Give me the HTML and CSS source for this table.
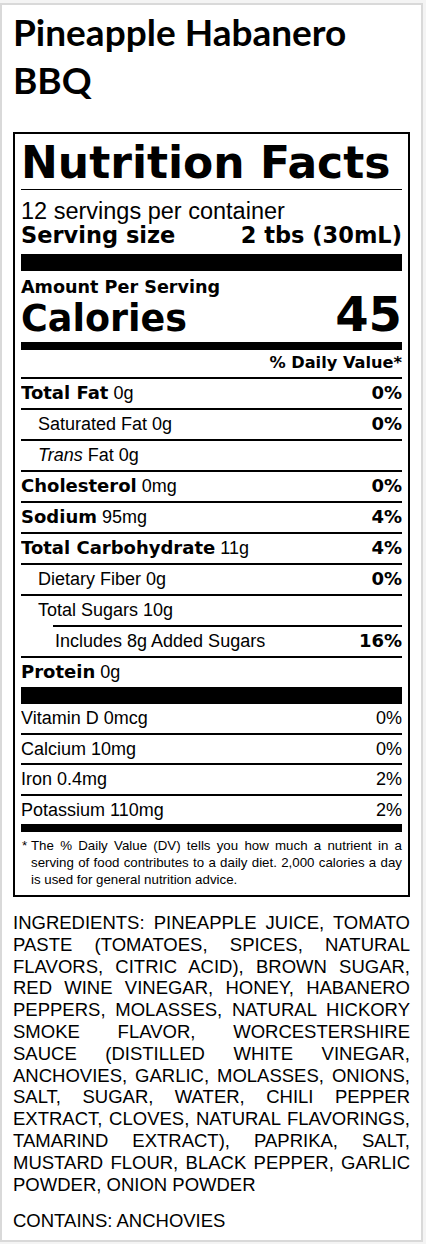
FILE: index.html
```html
<!DOCTYPE html>
<html lang="en">
<head>
    <meta charset="UTF-8">
    <meta name="viewport" content="width=device-width, initial-scale=1.0">
    <title>Pineapple Habanero BBQ</title>
    <link rel="stylesheet" href="styles.css">
</head>
<body>
    <div class="card">
        <h1 class="product-name">Pineapple Habanero BBQ</h1>

        <section class="label">
            <h2 class="facts-title">Nutrition Facts</h2>
            <p class="servings">12 servings per container</p>
            <p class="serving-size"><span>Serving size</span><span>2 tbs (30mL)</span></p>

            <div class="bar bar-lg"></div>

            <div class="calories">
                <p class="amount">Amount Per Serving</p>
                <div class="calories-row">
                    <span class="cal-label">Calories</span>
                    <span class="cal-value">45</span>
                </div>
            </div>

            <div class="bar bar-md"></div>

            <p class="dv-head">% Daily Value*</p>

            <div class="row"><span><b>Total Fat</b> 0g</span><b>0%</b></div>
            <div class="row indent"><span>Saturated Fat 0g</span><b>0%</b></div>
            <div class="row indent"><span><i>Trans</i> Fat 0g</span></div>
            <div class="row"><span><b>Cholesterol</b> 0mg</span><b>0%</b></div>
            <div class="row"><span><b>Sodium</b> 95mg</span><b>4%</b></div>
            <div class="row"><span><b>Total Carbohydrate</b> 11g</span><b>4%</b></div>
            <div class="row indent"><span>Dietary Fiber 0g</span><b>0%</b></div>
            <div class="row indent"><span>Total Sugars 10g</span></div>
            <div class="row added"><span>Includes 8g Added Sugars</span><b>16%</b></div>
            <div class="row"><span><b>Protein</b> 0g</span></div>

            <div class="bar bar-lg"></div>

            <div class="row vit first"><span>Vitamin D 0mcg</span><span>0%</span></div>
            <div class="row vit"><span>Calcium 10mg</span><span>0%</span></div>
            <div class="row vit"><span>Iron 0.4mg</span><span>2%</span></div>
            <div class="row vit"><span>Potassium 110mg</span><span>2%</span></div>

            <div class="bar bar-md"></div>

            <div class="footnote">
                <span class="star">*</span>
                <p>The % Daily Value (DV) tells you how much a nutrient in a serving of food contributes to a daily diet. 2,000 calories a day is used for general nutrition advice.</p>
            </div>
        </section>

        <p class="ingredients">INGREDIENTS: PINEAPPLE JUICE, TOMATO PASTE (TOMATOES, SPICES, NATURAL FLAVORS, CITRIC ACID), BROWN SUGAR, RED WINE VINEGAR, HONEY, HABANERO PEPPERS, MOLASSES, NATURAL HICKORY SMOKE FLAVOR, WORCESTERSHIRE SAUCE (DISTILLED WHITE VINEGAR, ANCHOVIES, GARLIC, MOLASSES, ONIONS, SALT, SUGAR, WATER, CHILI PEPPER EXTRACT, CLOVES, NATURAL FLAVORINGS, TAMARIND EXTRACT), PAPRIKA, SALT, MUSTARD FLOUR, BLACK PEPPER, GARLIC POWDER, ONION POWDER</p>
        <p class="ingredients contains">CONTAINS: ANCHOVIES</p>
    </div>
</body>
</html>
```

FILE: styles.css
```css
body {
    margin: 0;
    padding: 3px 0 0;
    background: #f4f4f4;
    font-family: "Liberation Sans", Arial, sans-serif;
    color: #000;
}

.card {
    width: 423px;
    box-sizing: border-box;
    background: #fff;
    border: 2px solid #d9d9d9;
    padding: 3px 11px 8px;
}

.product-name {
    margin: 0 0 28px 0;
    font-family: Lato, sans-serif;
    font-weight: 700;
    font-size: 37px;
    line-height: 48px;
}

.label {
    border: 2px solid #000;
    padding: 5px 6px 7px;
}

.label p {
    margin: 0;
}

.facts-title {
    margin: 0;
    padding-bottom: 2px;
    border-bottom: 1px solid #000;
    font-family: "DejaVu Sans", sans-serif;
    font-weight: 700;
    font-size: 44px;
    line-height: 48px;
}

.label .servings {
    margin-top: 8px;
    font-size: 23.5px;
    line-height: 26px;
}

.serving-size {
    display: flex;
    justify-content: space-between;
    font-family: "DejaVu Sans", sans-serif;
    font-weight: 700;
    font-size: 22.5px;
    line-height: 22px;
}

.bar {
    background: #000;
}

.bar-lg {
    height: 17px;
}

.serving-size + .bar-lg {
    margin-top: 8px;
}

.bar-md {
    height: 8px;
}

.calories {
    padding: 6px 0 4px;
    font-family: "DejaVu Sans", sans-serif;
    font-weight: 700;
}

.amount {
    font-size: 17.6px;
    line-height: 20px;
}

.calories-row {
    display: flex;
    justify-content: space-between;
    align-items: baseline;
}

.cal-label {
    font-size: 36.5px;
    line-height: 38px;
}

.cal-value {
    font-size: 48px;
    line-height: 34px;
}

.label .dv-head {
    margin-top: 3px;
    padding-bottom: 4px;
    text-align: right;
    font-family: "DejaVu Sans", sans-serif;
    font-weight: 700;
    font-size: 16.2px;
    line-height: 20px;
}

.row {
    display: flex;
    justify-content: space-between;
    align-items: baseline;
    height: 29px;
    overflow: hidden;
    border-top: 2px solid #000;
    font-size: 18px;
    line-height: 29px;
}

.row b {
    font-family: "DejaVu Sans", sans-serif;
    font-weight: 700;
    font-size: 18px;
    line-height: 1;
}

.row.indent > span:first-child {
    padding-left: 17px;
}

.row.added {
    margin-left: 32px;
}

.row.added > span:first-child {
    padding-left: 2px;
}

.row.vit {
    height: 28.5px;
    line-height: 28.5px;
}

.row.vit.first {
    border-top: none;
}

.footnote {
    display: flex;
    margin-top: 5px;
    font-size: 13.3px;
    line-height: 17px;
}

.footnote .star {
    flex: 0 0 9px;
    padding-left: 1px;
}

.footnote p {
    flex: 1;
    text-align: justify;
}

.ingredients {
    margin: 15px 0 0;
    font-size: 18.5px;
    line-height: 21.8px;
    text-align: justify;
}
```
